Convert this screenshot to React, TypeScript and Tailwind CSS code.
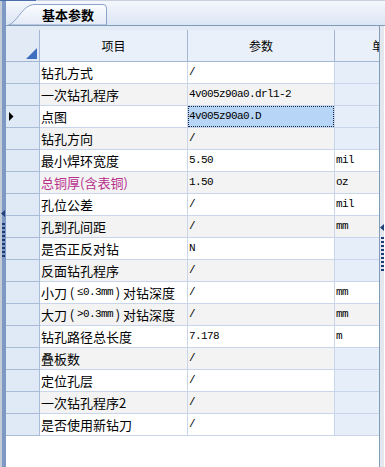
import React from 'react'

// ─── Data ─────────────────────────────────────────────────────────────────────

interface ParamRow {
  name: React.ReactNode
  key: string
  value: string
  unit: string
  pink?: boolean
  selected?: boolean
}

const cjk = "font-['Noto_Sans_CJK_SC',sans-serif]"
const mono = "font-['Liberation_Mono','Noto_Sans_CJK_SC',monospace] text-[11px] tracking-[-0.6px]"

// knife rows use narrow parens so the name fits the 项目 column like the original
const knife = (head: string, op: string) => (
  <>
    {head}
    <span className="inline-block w-[10px] text-center">(</span>
    <span className={mono}>{op}0.3mm</span>
    <span className="inline-block w-[10px] text-center">)</span>
    对钻深度
  </>
)

const rows: ParamRow[] = [
  { key: 'a', name: '钻孔方式', value: '/', unit: '' },
  { key: 'b', name: '一次钻孔程序', value: '4v005z90a0.drl1-2', unit: '' },
  { key: 'c', name: '点图', value: '4v005z90a0.D', unit: '', selected: true },
  { key: 'd', name: '钻孔方向', value: '/', unit: '' },
  { key: 'e', name: '最小焊环宽度', value: '5.50', unit: 'mil' },
  { key: 'f', name: '总铜厚(含表铜)', value: '1.50', unit: 'oz', pink: true },
  { key: 'g', name: '孔位公差', value: '/', unit: 'mil' },
  { key: 'h', name: '孔到孔间距', value: '/', unit: 'mm' },
  { key: 'i', name: '是否正反对钻', value: 'N', unit: '' },
  { key: 'j', name: '反面钻孔程序', value: '/', unit: '' },
  { key: 'k', name: knife('小刀', '≤'), value: '/', unit: 'mm' },
  { key: 'l', name: knife('大刀', '>'), value: '/', unit: 'mm' },
  { key: 'm', name: '钻孔路径总长度', value: '7.178', unit: 'm' },
  { key: 'n', name: '叠板数', value: '/', unit: '' },
  { key: 'o', name: '定位孔层', value: '/', unit: '' },
  { key: 'p', name: '一次钻孔程序2', value: '/', unit: '' },
  { key: 'q', name: '是否使用新钻刀', value: '/', unit: '' },
]

// ─── Pieces ───────────────────────────────────────────────────────────────────

function Grip() {
  return (
    <div className="flex flex-col items-center gap-[6px]">
      <svg width="4" height="7" viewBox="0 0 4 7">
        <path d="M4 0 L0 3.5 L4 7 Z" fill="#23407a" />
      </svg>
      <div className="w-[3px] h-[36px] bg-[repeating-linear-gradient(to_bottom,#1f3b78_0px,#1f3b78_2px,transparent_2px,transparent_4px)]" />
    </div>
  )
}

function Tab() {
  return (
    <div className="relative w-[99px] h-[21px] flex items-center">
      <svg className="absolute inset-0" width="99" height="21" viewBox="0 0 99 21">
        <defs>
          <linearGradient id="tabg" x1="0" y1="0" x2="0" y2="1">
            <stop offset="0" stopColor="#fbfcfe" />
            <stop offset="1" stopColor="#e3ebf8" />
          </linearGradient>
        </defs>
        <path
          d="M0.5 21 C8 19 14 4 22 1.5 Q24 0.5 27 0.5 L95 0.5 Q98.5 0.5 98.5 4 L98.5 21 Z"
          fill="url(#tabg)"
          stroke="#8ba3c8"
        />
      </svg>
      <span className={`relative pl-[34px] text-[13px] font-bold text-black ${cjk}`}>基本参数</span>
    </div>
  )
}

// ─── App ──────────────────────────────────────────────────────────────────────

export default function App() {
  return (
    <div className={`w-[385px] h-[467px] flex flex-col bg-white overflow-hidden ${cjk}`}>
      {/* top edge of the panel above */}
      <div className="h-[1px] flex">
        <div className="w-[36px] bg-[#4b6ea8]" />
        <div className="flex-1 bg-[#c9d1dd]" />
      </div>

      <div className="flex-1 flex min-h-0">
        {/* left splitter rail */}
        <div className="w-[6px] flex flex-col items-center pt-[209px] bg-[linear-gradient(to_right,#c4ccd8_0px,#c4ccd8_2px,#7e99c3_2px,#7e99c3_6px)]">
          <Grip />
        </div>

        <div className="flex-1 flex flex-col min-w-0">
          {/* tab strip */}
          <div className="h-[25px] flex items-end pl-[2px] bg-[linear-gradient(to_bottom,#f4f7fc,#dbe5f4)] border-b border-[#7f9db9]">
            <Tab />
          </div>

          <div className="flex flex-1 min-h-0">
            {/* grid */}
            <div className="w-[374px] flex flex-col border-r border-[#7f9db9] bg-white">
              <div className="h-[4px] bg-[#e2eaf6]" />

              <div className="grid grid-cols-[34px_148px_147px_44px]">
                {/* header */}
                <div className="h-[32px] bg-[#e2eaf6] border-r border-b border-[#a3b6d3] flex items-end justify-end pr-[1px] pb-[1px]">
                  <svg width="12" height="12" viewBox="0 0 12 12">
                    <path d="M11 0 L11 11 L0 11 Z" fill="#3e6fc0" />
                  </svg>
                </div>
                <div className="h-[32px] bg-[#eaf0f9] border-r border-b border-[#a3b6d3] flex items-center justify-center text-[12px] text-black">
                  项目
                </div>
                <div className="h-[32px] bg-[#eaf0f9] border-r border-b border-[#a3b6d3] flex items-center justify-center text-[12px] text-black">
                  参数
                </div>
                <div className="h-[32px] bg-[#eaf0f9] border-b border-[#a3b6d3] flex items-center pl-[37px] overflow-hidden whitespace-nowrap text-[12px] text-black">
                  单位
                </div>

                {/* rows */}
                {rows.map((r, i) => {
                  const rowBg = i % 2 === 1 ? 'bg-[#f3f3f3]' : 'bg-white'
                  return (
                    <React.Fragment key={r.key}>
                      <div className="h-[22px] bg-[#e0e9f6] border-r border-b border-[#a9bbd6] flex items-center pl-[3px]">
                        {r.selected && (
                          <svg width="5" height="9" viewBox="0 0 5 9">
                            <path d="M0 0 L4.5 4.5 L0 9 Z" fill="#000" />
                          </svg>
                        )}
                      </div>
                      <div
                        className={`h-[22px] ${rowBg} border-r border-b border-[#c8d5ea] flex items-center pl-[1px] text-[13px] whitespace-nowrap overflow-hidden ${
                          r.pink ? 'text-[#b82f8c]' : 'text-black'
                        }`}
                      >
                        {r.name}
                      </div>
                      <div className={`h-[22px] border-r border-b border-[#c8d5ea] ${r.selected ? 'bg-white' : rowBg}`}>
                        {r.selected ? (
                          <div className="h-full w-[146px] bg-[#b6d5f7] border border-dotted border-[#1b2a44] flex items-center">
                            <span className={`text-black ${mono}`}>{r.value}</span>
                          </div>
                        ) : (
                          <div className="h-full flex items-center pl-[1px]">
                            <span className={`text-black ${mono}`}>{r.value}</span>
                          </div>
                        )}
                      </div>
                      <div
                        className={`h-[22px] border-b border-[#c8d5ea] flex items-center pl-[1px] ${
                          r.unit ? rowBg : 'bg-[#e6eef9]'
                        }`}
                      >
                        <span className={`text-black ${mono}`}>{r.unit}</span>
                      </div>
                    </React.Fragment>
                  )
                })}
              </div>

              <div className="flex-1 bg-white" />
            </div>

            {/* right splitter rail */}
            <div className="w-[4px] flex flex-col items-center pt-[198px] bg-[#e4e8ee]">
              <Grip />
            </div>
          </div>
        </div>
      </div>
    </div>
  )
}
